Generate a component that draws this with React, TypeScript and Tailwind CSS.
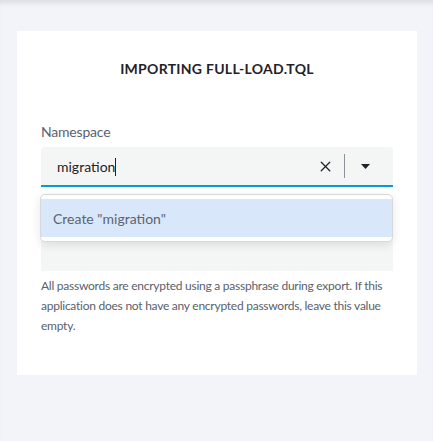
import { X } from 'lucide-react'

export default function App() {
  return (
    <main
      className="min-h-[441px] w-full bg-[#f3f4f9] shadow-[inset_0_6px_6px_-4px_rgba(0,0,0,0.12)] pt-[31px] pl-[17px]"
      style={{ fontFamily: 'Lato, "Noto Sans", sans-serif' }}
    >
      <div className="w-[400px] h-[344px] bg-white px-6 pt-[29px]">
        {/* Title */}
        <h1 className="text-center text-[14px] font-bold text-[#1f2329] tracking-[0.28px] leading-[18px]">
          IMPORTING FULL-LOAD.TQL
        </h1>

        <form className="mt-[45px]">
          <label className="block text-[14px] leading-[18px] text-[#5a6270] tracking-[-0.2px]">Namespace</label>

          <div className="relative mt-[6px]">
            <div className="flex h-[40px] items-center bg-[#f4f6f6] rounded-t-[3px] border-b-2 border-[#0799dc] pl-4 pr-4">
              <span className="flex-1 text-[14px] text-[#1f2329]">
                migration<span className="inline-block w-px h-[18px] bg-[#1f2329] align-middle -mt-[2px]" />
              </span>
              <X size={17} strokeWidth={1.8} className="text-[#1f2329]" />
              <span className="ml-[10px] mr-[16px] h-[24px] w-px bg-[#8c9299]" />
              <svg width="9" height="5" viewBox="0 0 9 5" className="mr-[7px]">
                <path d="M0 0h9L4.5 5z" fill="#1f2329" />
              </svg>
            </div>

            {/* Dropdown menu */}
            <div className="absolute left-[-1px] right-0 top-[47px] z-10 rounded-[5px] border border-[#d6d9dc] bg-white py-1 shadow-[0_3px_10px_rgba(0,0,0,0.1)]">
              <div className="flex h-[38px] items-center bg-[#d9e7fb] px-3 text-[14px] text-[#5b6472]">
                Create "migration"
              </div>
            </div>

            {/* field below, mostly covered */}
            <div className="mt-[44px] h-[40px] bg-[#f4f6f6]" />
          </div>

          <p className="mt-[5px] text-[12px] leading-[20px] text-[#5a616b] tracking-[-0.25px]">
            All passwords are encrypted using a passphrase during export. If this application does not have any encrypted passwords, leave this value empty.
          </p>
        </form>
      </div>
    </main>
  )
}
